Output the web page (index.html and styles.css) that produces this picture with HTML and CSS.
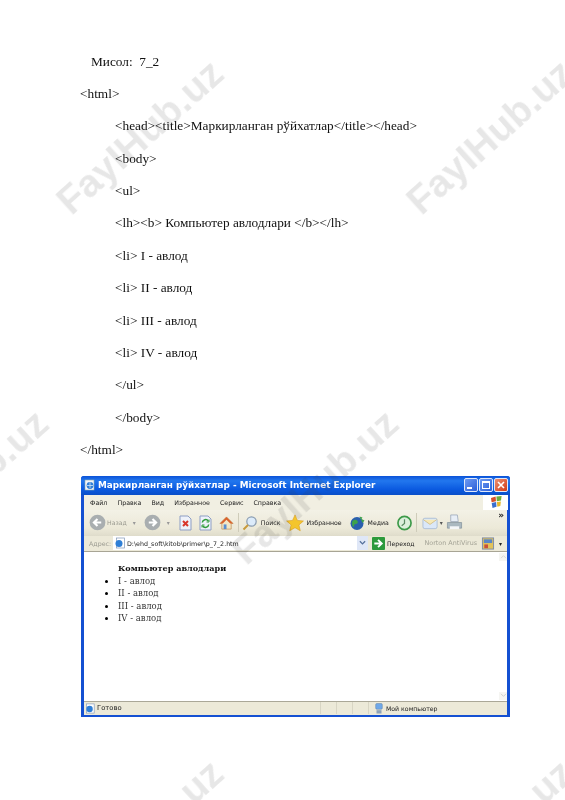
FILE: index.html
```html
<!DOCTYPE html>
<html lang="uz">
<head>
<meta charset="utf-8">
<title>Мисол 7_2</title>
<link rel="stylesheet" href="styles.css">
</head>
<body>
<main class="page">
  <section class="code">
    <p class="line lead">Мисол:&nbsp; 7_2</p>
    <p class="line">&lt;html&gt;</p>
    <p class="line in">&lt;head&gt;&lt;title&gt;Маркирланган рўйхатлар&lt;/title&gt;&lt;/head&gt;</p>
    <p class="line in">&lt;body&gt;</p>
    <p class="line in">&lt;ul&gt;</p>
    <p class="line in">&lt;lh&gt;&lt;b&gt; Компьютер авлодлари &lt;/b&gt;&lt;/lh&gt;</p>
    <p class="line in">&lt;li&gt; I - авлод</p>
    <p class="line in">&lt;li&gt; II - авлод</p>
    <p class="line in">&lt;li&gt; III - авлод</p>
    <p class="line in">&lt;li&gt; IV - авлод</p>
    <p class="line in">&lt;/ul&gt;</p>
    <p class="line in">&lt;/body&gt;</p>
    <p class="line">&lt;/html&gt;</p>
  </section>

  <section class="window">
    <header class="titlebar">
      <svg class="ti" viewBox="0 0 12 12"><rect x="1" y="1" width="9" height="10" fill="#f4f6fa" stroke="#8aa" stroke-width=".6"/><circle cx="6" cy="6.500" r="3.400" fill="#2f7fd6"/><path d="M3 6.500h6M6 3.200v6" stroke="#cfe4fa" stroke-width=".8"/></svg>
      <span class="title">Маркирланган рўйхатлар - Microsoft Internet Explorer</span>
      <span class="wbtn"><i class="min"></i></span>
      <span class="wbtn"><i class="max"></i></span>
      <span class="wbtn close"><svg viewBox="0 0 10 10"><path d="M2 2l6 6M8 2l-6 6" stroke="#fff" stroke-width="1.600"/></svg></span>
    </header>

    <nav class="menubar">
      <span>Файл</span><span>Правка</span><span>Вид</span><span>Избранное</span><span>Сервис</span><span>Справка</span>
      <span class="flag"><svg viewBox="0 0 14 14"><path d="M2 3l4.600-1.400.4 4.700-4.400 1z" fill="#d8502c"/><path d="M7.400 1.400L12.600 1l-.6 4.600-4.200.6z" fill="#6fae3c"/><path d="M2.700 8l4.400-1 .4 4.700-4 1.300z" fill="#3a6fd0"/><path d="M7.900 7l4-.6-.6 4.600-3 .8z" fill="#e6b82e"/></svg></span>
    </nav>

    <div class="toolbar">
      <svg class="nav" viewBox="0 0 16 16"><circle cx="8" cy="8" r="7.400" fill="#a9aeb0"/><path d="M11.500 8H5M8 4.600L4.600 8 8 11.400" fill="none" stroke="#fff" stroke-width="2"/></svg>
      <span class="muted back">Назад</span><span class="caret">▾</span>
      <svg class="nav fwd" viewBox="0 0 16 16"><circle cx="8" cy="8" r="7.400" fill="#a9aeb0"/><path d="M4.500 8H11M8 4.600L11.400 8 8 11.400" fill="none" stroke="#fff" stroke-width="2"/></svg>
      <span class="caret">▾</span>
      <svg class="tb stop" viewBox="0 0 14 16"><path d="M1.500 1h8l3 3v11h-11z" fill="#eef2fa" stroke="#8d9ec4"/><path d="M4.500 6l5 5M9.500 6l-5 5" stroke="#d8352a" stroke-width="2"/></svg>
      <svg class="tb" viewBox="0 0 14 16"><path d="M1.500 1h8l3 3v11h-11z" fill="#eef2fa" stroke="#8d9ec4"/><path d="M3.800 7.500a3.300 3.300 0 0 1 6-1.500M10.200 9.500a3.300 3.300 0 0 1-6 1.500" fill="none" stroke="#2f9c3c" stroke-width="1.500"/><path d="M10.500 4.500v2.500H8M3.500 12.500V10H6" fill="none" stroke="#2f9c3c"/></svg>
      <svg class="tb home" viewBox="0 0 16 16"><path d="M8 1.500L1 8.500h2v6h10v-6h2z" fill="#f3e6c4" stroke="#b98a50" stroke-width=".7"/><path d="M8 1.500L1 8.500h3L8 4.500l4 4h3z" fill="#d9622c"/><rect x="5" y="9.500" width="3" height="5" fill="#5b8fd0"/></svg>
      <i class="sep"></i>
      <svg class="tb search" viewBox="0 0 16 16"><circle cx="9.500" cy="6.500" r="4.700" fill="#dcebfa" stroke="#8a9cb0" stroke-width="1.200"/><path d="M6 10l-4.500 4.500" stroke="#c89a3a" stroke-width="2"/></svg>
      <span class="label find">Поиск</span>
      <svg class="tb star" viewBox="0 0 16 16"><path d="M8 .8l2.200 4.900 5.300.5-4 3.500 1.200 5.200L8 12.200l-4.700 2.700 1.200-5.200-4-3.500 5.300-.5z" fill="#f4c52c" stroke="#d69a1c" stroke-width=".5"/></svg>
      <span class="label">Избранное</span>
      <svg class="tb media" viewBox="0 0 16 16"><circle cx="7.500" cy="8.500" r="6.500" fill="#2a5fae"/><path d="M3 6c2-2 4-1 5 0s0 3-2 3-1 3-2 3-2-4-1-6z" fill="#3fa24a"/><path d="M10 1.500l3 1-1 1.500 3 1.500-2 2.500" fill="#3fa24a"/></svg>
      <span class="label">Медиа</span>
      <svg class="tb hist" viewBox="0 0 16 16"><circle cx="8" cy="8" r="7" fill="#dcefdc" stroke="#3e9a4a" stroke-width="1.800"/><path d="M8 4v4.500L5 11" fill="none" stroke="#5a8a62" stroke-width="1.300"/></svg>
      <i class="sep"></i>
      <svg class="tb mail" viewBox="0 0 18 16"><rect x="1" y="3" width="15" height="11" rx="2" fill="#dbe8f8" stroke="#9fb4d0" stroke-width=".8"/><path d="M1.500 4.500L8.500 9.500 15.500 4.500" fill="#f6e9b8" stroke="#c8b070" stroke-width=".7"/></svg>
      <span class="caret tiny">▾</span>
      <svg class="tb print" viewBox="0 0 18 18"><path d="M5 1h7l1 7H5z" fill="#e8eef6" stroke="#8a9ab0" stroke-width=".7"/><path d="M1.500 9h15v6h-15z" fill="#aab8c0" stroke="#7d8c96" stroke-width=".7"/><path d="M4 13h10v3H4z" fill="#f4f6f8"/></svg>
      <span class="chev">»</span>
    </div>

    <div class="addressbar">
      <span class="muted addr">Адрес:</span>
      <div class="input">
        <svg class="page-i" viewBox="0 0 12 12"><rect x="2.500" y="1" width="8" height="10" fill="#fff" stroke="#7f96b8" stroke-width=".7"/><circle cx="5" cy="6.500" r="3.500" fill="#2f7fd6"/></svg>
        <span class="url">D:\ehd_soft\kitob\primer\p_7_2.htm</span>
        <span class="drop"><svg viewBox="0 0 8 6"><path d="M1 1l3 3 3-3" fill="none" stroke="#56719c" stroke-width="1.500"/></svg></span>
      </div>
      <svg class="go" viewBox="0 0 14 14"><rect width="14" height="14" rx="1" fill="#2c9a3c"/><path d="M2.500 7h7M6.500 3l4 4-4 4" fill="none" stroke="#fff" stroke-width="2"/></svg>
      <span class="label gol">Переход</span>
      <span class="norton">Norton AntiVirus</span>
      <svg class="nv" viewBox="0 0 14 14"><rect x="1" y="1" width="12" height="12" fill="#e2c25a" stroke="#7c8aa8"/><rect x="2.500" y="2.500" width="9" height="4" fill="#5a86c8"/><rect x="3" y="8" width="4" height="4" fill="#c8503c"/></svg>
      <span class="caret dark">▾</span>
    </div>

    <div class="content">
      <div class="doc">
        <strong class="doc-head">Компьютер авлодлари</strong>
        <ul class="doc-list">
          <li>I - авлод</li>
          <li>II - авлод</li>
          <li>III - авлод</li>
          <li>IV - авлод</li>
        </ul>
      </div>
      <div class="scroll">
        <span class="sb"><svg viewBox="0 0 8 6"><path d="M1 5l3-3 3 3" fill="none" stroke="#d8d8d4" stroke-width="1.200"/></svg></span>
        <span class="sb"><svg viewBox="0 0 8 6"><path d="M1 1l3 3 3-3" fill="none" stroke="#cfcfcb" stroke-width="1.200"/></svg></span>
      </div>
    </div>

    <footer class="statusbar">
      <svg class="st-i" viewBox="0 0 12 12"><rect x="1.500" y="1" width="8.500" height="10" fill="#fff" stroke="#7f96b8" stroke-width=".7"/><circle cx="5" cy="6.500" r="3.500" fill="#2f7fd6"/></svg>
      <span class="ready">Готово</span>
      <i class="cell"></i><i class="cell"></i><i class="cell"></i><i class="cell"></i>
      <svg class="st-pc" viewBox="0 0 12 14"><rect x="2" y="1" width="8" height="7" rx="1.500" fill="#6fa8e8" stroke="#56789c" stroke-width=".5"/><rect x="3" y="9" width="6" height="4" fill="#8da2b8"/></svg>
      <span class="zone">Мой компьютер</span>
    </footer>
  </section>

  <div class="marks" aria-hidden="true">
    <span class="mark m1">FayIHub.uz</span>
    <span class="mark m2">FayIHub.uz</span>
    <span class="mark m3">FayIHub.uz</span>
    <span class="mark m4">FayIHub.uz</span>
    <span class="mark m5">FayIHub.uz</span>
    <span class="mark m6">FayIHub.uz</span>
  </div>
</main>
</body>
</html>
```
FILE: styles.css
```css
* { box-sizing: border-box; }
html, body { margin: 0; background: #fff; }
.page { position: relative; width: 565px; height: 800px; overflow: hidden; padding-top: 45.500px; }

.code { font-family: "Liberation Serif", serif; font-size: 13.300px; color: #111; padding-left: 80px; filter: blur(.25px); }
.line { margin: 0; height: 32.400px; line-height: 32.400px; white-space: pre; }
.lead { padding-left: 11px; }
.in { padding-left: 35px; }

.window { margin: 9.300px 0 0 81px; width: 429px; height: 241px; display: flex; flex-direction: column; background: #1450d2; padding: 0 3px 2px 3px; border-radius: 3px 3px 0 0; font-family: "DejaVu Sans", sans-serif; filter: blur(.35px); }
.titlebar { height: 19px; margin: 0 -3px; padding: 0 2px 0 3px; display: flex; align-items: center; border-radius: 3px 3px 0 0; background: linear-gradient(#0a52d8, #2277ee 25%, #0b5ae0 70%, #0a4fc8); }
.ti { width: 12px; height: 12px; margin-right: 2px; }
.title { flex: 1; color: #fff; font-weight: 700; font-size: 8.850px; white-space: nowrap; }
.wbtn { width: 14px; height: 14px; margin-left: 1px; border: 1px solid #dfe8fa; border-radius: 2px; background: linear-gradient(135deg, #6d9af2, #2c5fd8); display: flex; align-items: flex-end; padding: 2px; }
.wbtn.close { background: linear-gradient(135deg, #ee8f70, #d03c18); padding: 1px; }
.wbtn svg { width: 100%; height: 100%; }
.min { display: block; width: 5px; height: 2px; background: #fff; }
.max { display: block; width: 100%; height: 100%; border: 1px solid #fff; border-top-width: 2px; }

.menubar { height: 15px; background: #f1efe2; display: flex; align-items: center; padding-left: 6px; gap: 10px; font-size: 6.300px; color: #222; position: relative; }
.flag { position: absolute; right: -1px; top: 0; width: 25px; height: 15px; background: #fff; display: flex; align-items: center; justify-content: center; }
.flag svg { width: 14px; height: 14px; }

.toolbar { height: 26px; background: linear-gradient(#f3f1e6, #ece9d8 70%, #dfdccb); display: flex; align-items: center; padding-left: 5px; font-size: 6.200px; color: #222; position: relative; }
.nav { width: 17px; height: 17px; flex: none; }
.muted { color: #9a9a90; }
.back { margin-left: 1px; }
.caret { font-size: 6px; color: #999; margin-left: 6px; }
.caret.dark { color: #222; margin-left: 4px; }
.caret.tiny { margin-left: 1px; color: #555; }
.fwd { margin-left: 8px; }
.tb { width: 15px; height: 16px; flex: none; }
.stop { margin-left: 8px; }
.tb + .tb { margin-left: 5px; }
.tb + .home { margin-left: 6px; }
.sep { width: 1px; height: 19px; background: #cfccba; margin: 0 3px 0 4px; }
.label { margin-left: 2px; white-space: nowrap; }
.find { margin-left: 3px; }
.search { width: 16px; }
.star { width: 18px; height: 18px; margin-left: 6px; }
.media { width: 17px; height: 16px; margin-left: 7px; }
.hist { margin-left: 8px; }
.mail { width: 17px; margin-left: 2px; }
.print { width: 17px; height: 17px; margin-left: 3px; }
.chev { position: absolute; right: 3px; top: 0; font-size: 9px; font-weight: 700; color: #222; line-height: 10px; }

.addressbar { height: 15px; background: #ece9d8; display: flex; align-items: center; padding-left: 5px; font-size: 6.300px; color: #222; }
.addr { width: 24px; }
.input { width: 255px; height: 14px; background: #fff; display: flex; align-items: center; padding-left: 1px; position: relative; }
.page-i { width: 12px; height: 12px; }
.url { margin-left: 1px; color: #222; white-space: nowrap; }
.drop { position: absolute; right: 0; top: 0; bottom: 0; width: 11px; background: #dfe7f7; display: flex; align-items: center; justify-content: center; }
.drop svg { width: 7px; height: 6px; }
.go { width: 13px; height: 13px; margin-left: 4px; flex: none; }
.gol { font-size: 6.100px; }
.norton { margin-left: 10px; color: #a3a295; font-size: 6.400px; white-space: nowrap; }
.nv { width: 14px; height: 13px; margin-left: 4px; }

.content { flex: 1; background: #fff; display: flex; justify-content: space-between; border-top: 1.500px solid #a8a595; min-height: 0; }
.doc { padding: 10.500px 0 0 34px; font-family: "DejaVu Serif", serif; font-size: 8.500px; line-height: 12.500px; color: #333; }
.doc-head { color: #111; display: block; height: 12.500px; font-size: 8.100px; }
.doc-list { margin: 0; padding: 0; list-style: disc; }
.doc-list li::marker { color: #000; font-size: 11px; }
.scroll { width: 8px; display: flex; flex-direction: column; justify-content: space-between; padding: 1px 0; }
.sb { height: 8px; display: flex; align-items: center; justify-content: center; background: #f5f5f2; }
.sb svg { width: 7px; height: 5px; }

.statusbar { height: 14px; background: #ece9d8; border-top: 1px solid #aaa797; display: flex; align-items: center; padding-left: 1px; font-size: 6.800px; color: #222; }
.st-i { width: 11px; height: 11px; }
.ready { margin-left: 1px; width: 208px; }
.cell { width: 16px; height: 12px; border-right: 1px solid #d8d5c4; }
.st-pc { width: 10px; height: 13px; margin-left: 5px; }
.zone { margin-left: 2px; white-space: nowrap; font-size: 6.200px; }

.marks { position: absolute; inset: 0; pointer-events: none; }
.mark { position: absolute; width: 240px; height: 40px; margin: -20px 0 0 -120px; line-height: 40px; text-align: center; font-family: "Liberation Sans", sans-serif; font-weight: 700; font-size: 39px; color: rgba(60, 60, 60, .12); transform: rotate(-42deg); white-space: nowrap; filter: blur(.4px); }
.m1 { left: 140px; top: 137px; }
.m2 { left: 490px; top: 137px; }
.m3 { left: -35px; top: 487px; }
.m4 { left: 315px; top: 487px; }
.m5 { left: 140px; top: 837px; }
.m6 { left: 490px; top: 837px; }
```
